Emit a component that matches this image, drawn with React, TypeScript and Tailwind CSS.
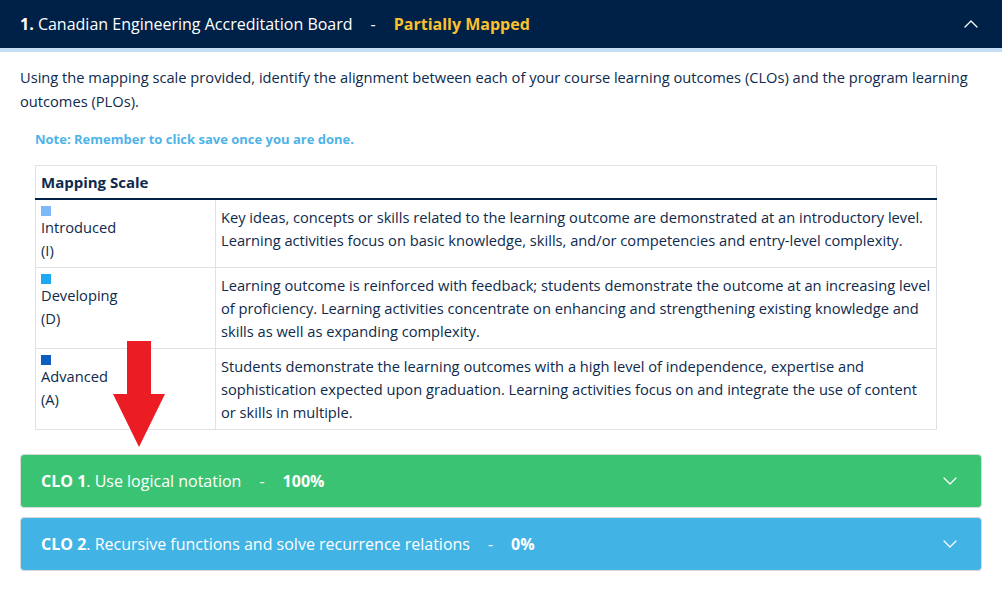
import { ChevronDown, ChevronUp } from 'lucide-react';

const scale = [
  {
    color: 'bg-[#7db9f6]',
    label: 'Introduced',
    code: '(I)',
    text: 'Key ideas, concepts or skills related to the learning outcome are demonstrated at an introductory level. Learning activities focus on basic knowledge, skills, and/or competencies and entry-level complexity.',
  },
  {
    color: 'bg-[#1ca8f2]',
    label: 'Developing',
    code: '(D)',
    text: 'Learning outcome is reinforced with feedback; students demonstrate the outcome at an increasing level of proficiency. Learning activities concentrate on enhancing and strengthening existing knowledge and skills as well as expanding complexity.',
  },
  {
    color: 'bg-[#0b5fbf]',
    label: 'Advanced',
    code: '(A)',
    text: 'Students demonstrate the learning outcomes with a high level of independence, expertise and sophistication expected upon graduation. Learning activities focus on and integrate the use of content or skills in multiple.',
  },
];

const clos = [
  { num: 'CLO 1', title: 'Use logical notation', pct: '100%', bg: 'bg-[#3bc374]' },
  { num: 'CLO 2', title: 'Recursive functions and solve recurrence relations', pct: '0%', bg: 'bg-[#41b3e5]' },
];

export default function App() {
  return (
    <div className="relative min-h-[605px] bg-white text-[#0e2a4d] font-['Open_Sans',sans-serif]">
      {/* Board header */}
      <header className="h-[48px] bg-[#002147] border-b-4 border-[#c6ddf6] box-content flex items-center justify-between pl-5 pr-[19px]">
        <div className="text-[16px] text-white">
          <span className="font-bold">1.</span> Canadian Engineering Accreditation Board
          <span className="mx-[18px]">-</span>
          <span className="font-bold text-[#fbc02d]">Partially Mapped</span>
        </div>
        <ChevronUp className="w-[24px] h-[24px] text-white" strokeWidth={1.25} />
      </header>

      <main className="px-5 pt-[13px]">
        <p className="text-[14.67px] leading-6">
          Using the mapping scale provided, identify the alignment between each of your course learning outcomes (CLOs) and the program learning outcomes (PLOs).
        </p>

        <p className="mt-[17px] ml-[15px] text-[13px] font-bold text-[#4fb3e8]">
          Note: Remember to click save once you are done.
        </p>

        {/* Mapping scale */}
        <table className="mt-[15px] ml-[15px] w-[902px] border-collapse border border-[#dee2e6] text-[14.67px]">
          <thead>
            <tr className="border-b-2 border-[#002147]">
              <th colSpan={2} className="h-[34px] px-[5px] text-left font-bold text-[15px]">
                Mapping Scale
              </th>
            </tr>
          </thead>
          <tbody>
            {scale.map((s) => (
              <tr key={s.label} className="border-b border-[#dee2e6]">
                <td className="w-[180px] align-top px-[5px] pt-[6px] pb-[5px] border-r border-[#dee2e6] leading-[23px]">
                  <div className={`w-[10px] h-[10px] ${s.color}`} />
                  <div>{s.label}</div>
                  <div>{s.code}</div>
                </td>
                <td className="align-top px-[5px] pt-[6px] pb-[5px] leading-[23px]">{s.text}</td>
              </tr>
            ))}
          </tbody>
        </table>

        {/* CLO bars */}
        <div className="mt-[24px] flex flex-col gap-[9px]">
          {clos.map((c) => (
            <div
              key={c.num}
              className={`h-[54px] ${c.bg} rounded-[4px] border border-[#d9d9d9] flex items-center justify-between pl-5 pr-[19px] text-white text-[16px]`}
            >
              <div>
                <span className="font-bold">{c.num}</span>. {c.title}
                <span className="mx-[18px]">-</span>
                <span className="font-bold">{c.pct}</span>
              </div>
              <ChevronDown className="w-[24px] h-[24px]" strokeWidth={1.25} />
            </div>
          ))}
        </div>
      </main>

      {/* Red arrow annotation */}
      <svg className="absolute left-[112px] top-[340px]" width="54" height="108" viewBox="0 0 54 108">
        <polygon points="15,1 39,1 39,54 53,54 27,107 1,54 15,54" fill="#ec1c24" />
      </svg>
    </div>
  );
}
